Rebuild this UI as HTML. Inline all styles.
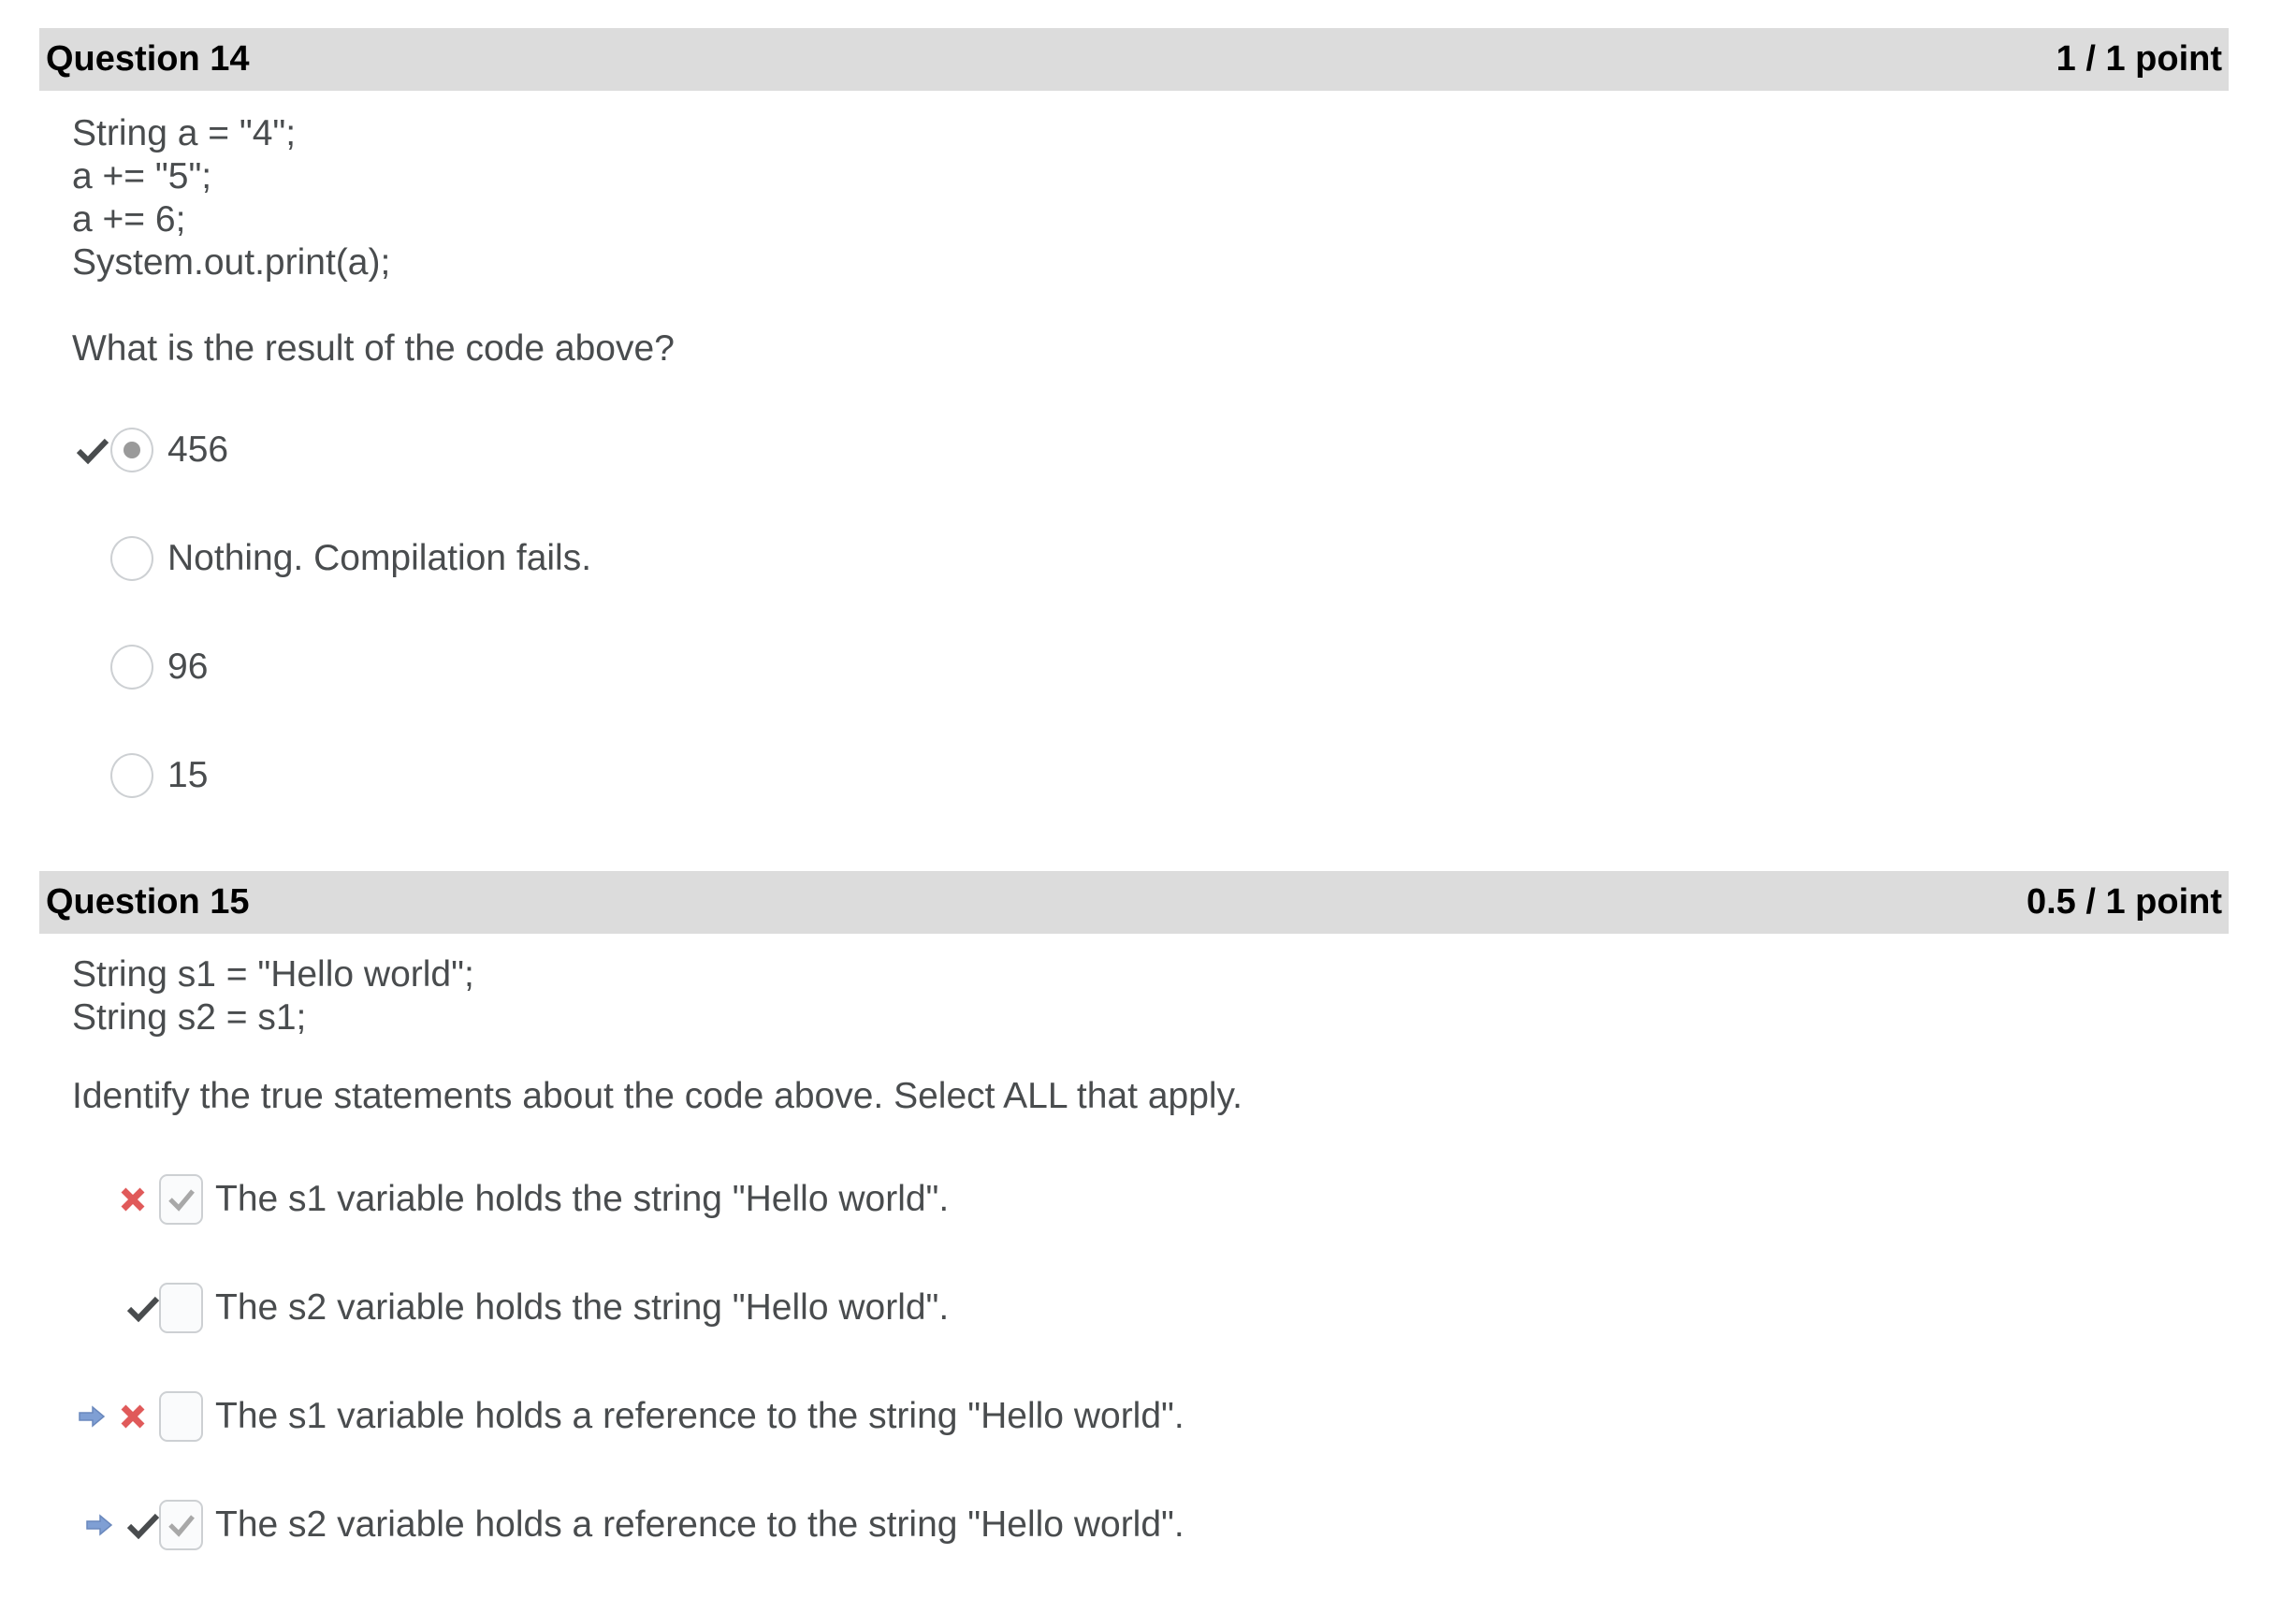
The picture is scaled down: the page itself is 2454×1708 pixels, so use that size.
<!DOCTYPE html>
<html><head><meta charset="utf-8"><style>
body{margin:0;width:2454px;height:1708px;background:#fff;position:relative;overflow:hidden;font-family:"Liberation Sans",sans-serif;color:#494c4e}
.hd{position:absolute;left:42px;width:2340px;height:67px;background:#dcdcdc}
.hd .t{position:absolute;left:7px;top:0;line-height:67px;font-size:38px;font-weight:bold;color:#000}
.hd .p{position:absolute;right:7px;top:0;line-height:67px;font-size:38px;font-weight:bold;color:#000}
.tx{position:absolute;font-size:39px;line-height:46px;white-space:nowrap}
.r{position:absolute;width:46px;height:48px;border:2px solid #cdd0d3;border-radius:50%;background:#fff;box-sizing:border-box}
.cb{position:absolute;width:47px;height:54px;border:2px solid #cdd0d3;border-radius:9px;background:#fafbfc;box-sizing:border-box}
svg{position:absolute}
</style></head><body>
<div class="hd" style="top:30px"><span class="t">Question 14</span><span class="p">1 / 1 point</span></div>
<div class="tx" style="left:77px;top:120px">String a = "4";<br>a += "5";<br>a += 6;<br>System.out.print(a);</div>
<div class="tx" style="left:77px;top:350px">What is the result of the code above?</div>

<svg style="left:81px;top:467px" width="36" height="30" viewBox="0 0 36 30"><path d="M3 15 L13 25 L33 4" stroke="#494c4e" stroke-width="6" fill="none"/></svg>
<div class="r" style="left:118px;top:457px"><div style="position:absolute;left:12px;top:13px;width:18px;height:18px;border-radius:50%;background:#9a9a9a"></div></div>
<div class="tx" style="left:179px;top:458px">456</div>

<div class="r" style="left:118px;top:573px"></div>
<div class="tx" style="left:179px;top:574px">Nothing. Compilation fails.</div>
<div class="r" style="left:118px;top:689px"></div>
<div class="tx" style="left:179px;top:690px">96</div>
<div class="r" style="left:118px;top:805px"></div>
<div class="tx" style="left:179px;top:806px">15</div>

<div class="hd" style="top:931px"><span class="t">Question 15</span><span class="p">0.5 / 1 point</span></div>
<div class="tx" style="left:77px;top:1019px">String s1 = "Hello world";<br>String s2 = s1;</div>
<div class="tx" style="left:77px;top:1149px">Identify the true statements about the code above. Select ALL that apply.</div>

<svg style="left:128px;top:1268px" width="28" height="28" viewBox="0 0 28 28"><path d="M4 4 L24 24 M24 4 L4 24" stroke="#e05a5a" stroke-width="7" fill="none"/></svg>
<div class="cb" style="left:170px;top:1255px"><svg style="left:7px;top:11px" width="30" height="28" viewBox="0 0 30 28"><path d="M3 14 L12 23 L27 5" stroke="#a8a8a8" stroke-width="5" fill="none"/></svg></div>
<div class="tx" style="left:230px;top:1259px">The s1 variable holds the string "Hello world".</div>

<svg style="left:135px;top:1384px" width="36" height="30" viewBox="0 0 36 30"><path d="M3 15 L13 25 L33 4" stroke="#494c4e" stroke-width="6" fill="none"/></svg>
<div class="cb" style="left:170px;top:1371px"></div>
<div class="tx" style="left:230px;top:1375px">The s2 variable holds the string "Hello world".</div>

<svg style="left:83px;top:1502px" width="30" height="24" viewBox="0 0 30 24"><path d="M2 8 H16 V2 L28 12 L16 22 V16 H2 Z" fill="#7f9fd4" stroke="#6a88bd" stroke-width="1.5"/></svg>
<svg style="left:128px;top:1500px" width="28" height="28" viewBox="0 0 28 28"><path d="M4 4 L24 24 M24 4 L4 24" stroke="#e05a5a" stroke-width="7" fill="none"/></svg>
<div class="cb" style="left:170px;top:1487px"></div>
<div class="tx" style="left:230px;top:1491px">The s1 variable holds a reference to the string "Hello world".</div>

<svg style="left:91px;top:1618px" width="30" height="24" viewBox="0 0 30 24"><path d="M2 8 H16 V2 L28 12 L16 22 V16 H2 Z" fill="#7f9fd4" stroke="#6a88bd" stroke-width="1.5"/></svg>
<svg style="left:135px;top:1616px" width="36" height="30" viewBox="0 0 36 30"><path d="M3 15 L13 25 L33 4" stroke="#494c4e" stroke-width="6" fill="none"/></svg>
<div class="cb" style="left:170px;top:1603px"><svg style="left:7px;top:11px" width="30" height="28" viewBox="0 0 30 28"><path d="M3 14 L12 23 L27 5" stroke="#a8a8a8" stroke-width="5" fill="none"/></svg></div>
<div class="tx" style="left:230px;top:1607px">The s2 variable holds a reference to the string "Hello world".</div>
</body></html>
